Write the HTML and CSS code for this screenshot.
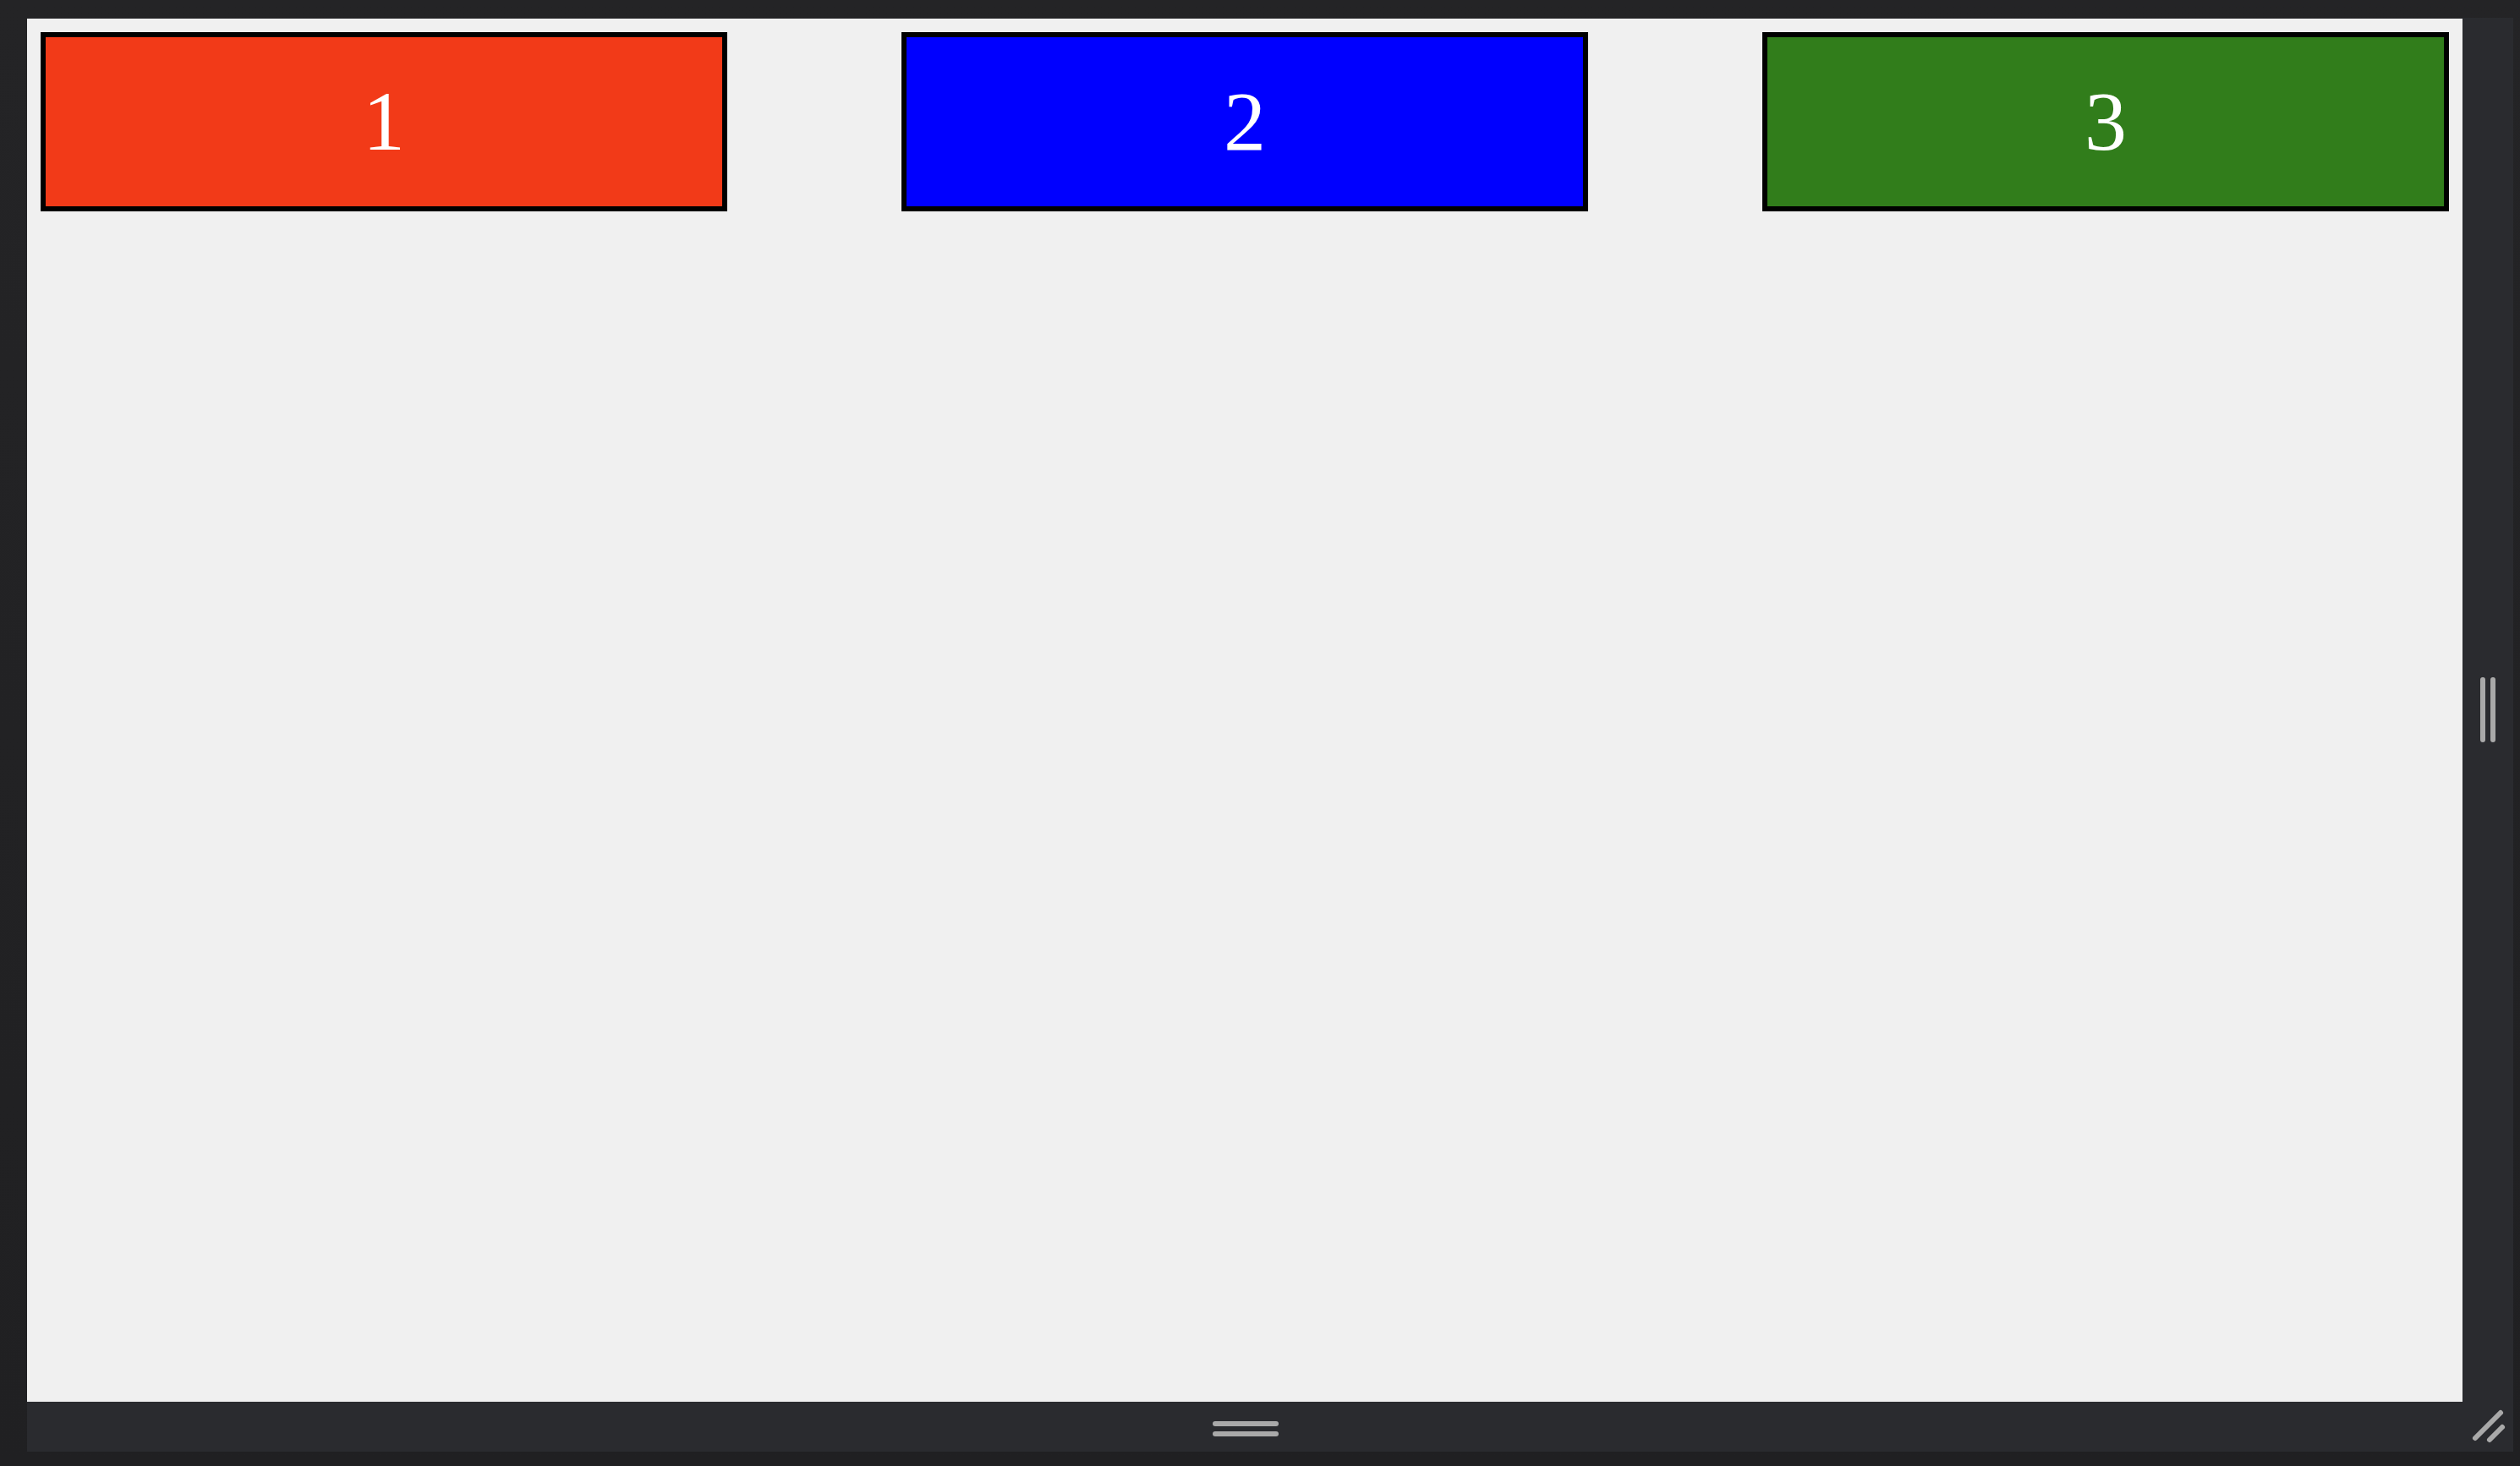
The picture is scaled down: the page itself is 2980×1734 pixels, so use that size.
FILE: index.html
```html
<!DOCTYPE html>
<html>
<head>
<meta charset="utf-8">
<link rel="stylesheet" href="styles.css">
</head>
<body>
<div class="shell">
  <main class="stage">
    <div class="box red">1</div>
    <div class="box blue">2</div>
    <div class="box green">3</div>
  </main>
  <div class="side">
    <div class="grip-v"><span></span><span></span></div>
  </div>
  <div class="bottom">
    <div class="grip-h"><span></span><span></span></div>
  </div>
  <div class="corner">
    <svg width="60" height="59" viewBox="0 0 60 59">
      <line x1="15" y1="43" x2="45" y2="13" stroke="#a9a9a9" stroke-width="6" stroke-linecap="round"/>
      <line x1="32" y1="45" x2="47" y2="30" stroke="#a9a9a9" stroke-width="6" stroke-linecap="round"/>
    </svg>
  </div>
</div>
</body>
</html>
```

FILE: styles.css
```css
html, body {
  margin: 0;
  padding: 0;
}
body {
  background: #212123;
  width: 2980px;
  height: 1734px;
  overflow: hidden;
}
.shell {
  display: grid;
  grid-template-columns: 2880px 60px;
  grid-template-rows: 1636px 59px;
  padding: 22px 8px 17px 32px;
  background: linear-gradient(#242426, #202022);
}
.stage {
  background: #f0f0f0;
  display: flex;
  justify-content: space-between;
  align-items: flex-start;
  padding: 16px;
}
.box {
  width: 800px;
  height: 200px;
  border: 6px solid #000;
  color: #fff;
  font-family: "Liberation Serif", "Times New Roman", Tinos, Times, serif;
  font-size: 100px;
  line-height: 1;
  display: flex;
  align-items: center;
  justify-content: center;
}
.red { background: #f23a18; }
.blue { background: #0000ff; }
.green { background: #317d1b; }
.side {
  background: #2a2b2f;
  margin-top: -1px;
  display: flex;
  align-items: center;
  justify-content: center;
}
.grip-v {
  display: flex;
  gap: 6px;
}
.grip-v span {
  width: 6px;
  height: 77px;
  border-radius: 3px;
  background: #a9a9a9;
}
.bottom {
  background: #2a2b2f;
  display: flex;
  justify-content: center;
  align-items: flex-start;
  padding-top: 23px;
}
.grip-h {
  display: flex;
  flex-direction: column;
  gap: 6px;
  margin-left: 2px;
}
.grip-h span {
  width: 78px;
  height: 6px;
  border-radius: 3px;
  background: #a9a9a9;
}
.corner {
  background: #2a2b2f;
  display: flex;
}
```
